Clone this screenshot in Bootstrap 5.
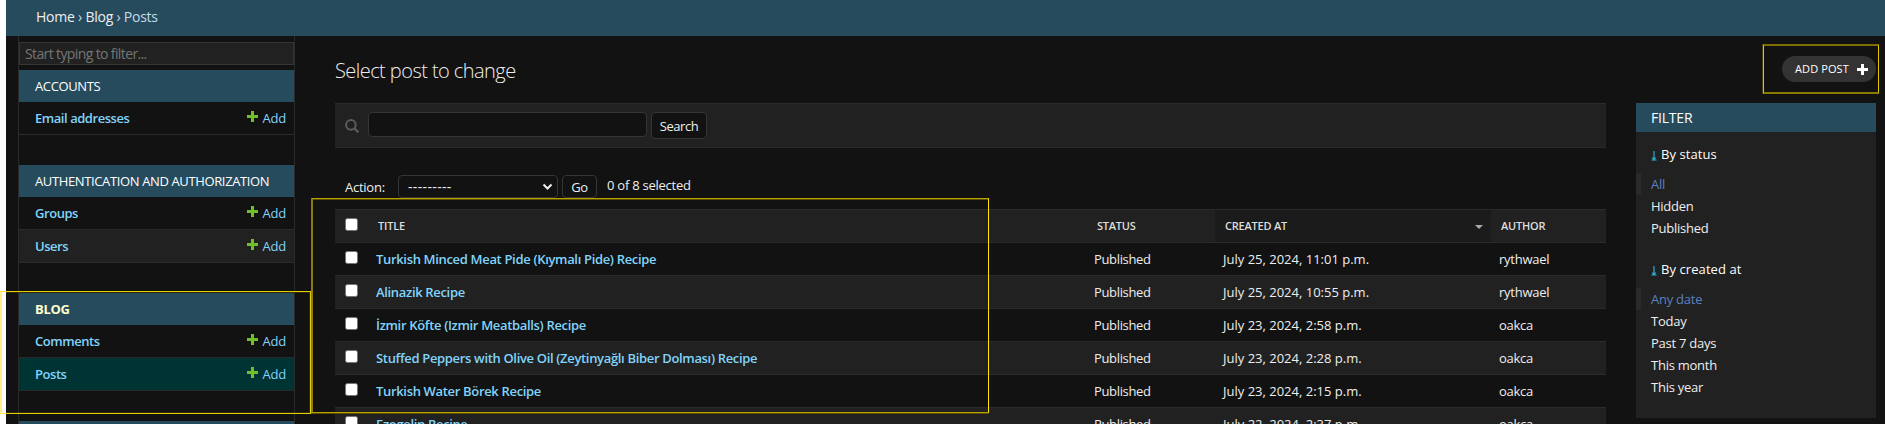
<!DOCTYPE html>
<html lang="en" data-bs-theme="dark">
<head>
<meta charset="utf-8">
<meta name="viewport" content="width=device-width, initial-scale=1">
<title>Select post to change</title>
<link rel="stylesheet" href="https://cdn.jsdelivr.net/npm/bootstrap@5.3.0/dist/css/bootstrap.min.css">
<style>
html { background: #fff; }
body { margin: 0 0 0 6px; height: 424px; overflow: hidden; background: #121212; color: #eee; font: 13px/20px "Open Sans", "Noto Sans", sans-serif; letter-spacing: -.25px; }
a { text-decoration: none; }
.crumbs { height: 36px; background: #264b5d; padding: 0 30px 2px; font-size: 14px; letter-spacing: -.24px; color: #c4dce8; }
.crumbs a { color: #eee; }
.side { width: 277px; margin-left: 12px; border: solid #2a2a2a; border-width: 0 1px; height: 388px; padding-top: 6px; overflow: hidden; }
.side .form-control { height: 23px; padding: 0 5px; border: 1px solid #353535; border-radius: 0; background: #212121; font-size: 14px; line-height: 21px; letter-spacing: -.62px; margin-bottom: 5px; }
.side .form-control::placeholder { color: #757575; }
.app { margin-bottom: 30px; }
.app-title { height: 32px; background: #264b5d; padding-left: 16px; line-height: 33px; text-transform: uppercase; letter-spacing: -.37px; color: #fff; }
.app-title.current { color: #ffc; font-weight: 700; letter-spacing: -.3px; }
.model { height: 33px; border-bottom: 1px solid #2a2a2a; padding: 0 8px 0 16px; line-height: 32px; }
.model a { color: #81d4fa; }
.model a:first-child { font-weight: 600; letter-spacing: -.45px; }
.model svg { display: block; margin: -3px 5px 0 0; }
.alt { background: #212121; }
.chosen { background: #033; }
.content-col { width: 1271px; margin-left: 40px; }
h1 { font-size: 20px; font-weight: 300; line-height: 26px; margin: 22px 0 19px; letter-spacing: -.56px; color: #eee; }
.toolbar { height: 45px; background: #212121; border: solid #2a2a2a; border-width: 1px 0; padding: 8px 10px; }
.query { width: 279px; height: 25px; background: #121212; border: 1px solid #353535; border-radius: 4px; margin: 0 4px 0 9px; padding: 2px 6px; }
.dj-btn { background: #121212; border: 1px solid #353535; border-radius: 4px; padding: 0; color: #eee; font-size: 13px; letter-spacing: -.3px; }
.btn-search { width: 56px; height: 27px; letter-spacing: -.45px; }
.btn-go { width: 35px; height: 23px; }
.actions { height: 61px; padding: 27px 10px 11px; }
.actions .form-select { width: 160px; height: 23px; padding: 0 9px; font-size: 14px; line-height: 21px; letter-spacing: .9px; background-color: #121212; border: 1px solid #353535; border-radius: 4px; color: #eee; background-size: 11px; background-position: right 4px center; background-image: url("data:image/svg+xml,%3Csvg xmlns='http://www.w3.org/2000/svg' viewBox='0 0 11 11'%3E%3Cpath d='M1.5 3.5 5.5 7.5 9.5 3.5' fill='none' stroke='%23eee' stroke-width='2'/%3E%3C/svg%3E"); }
.actions .form-select { letter-spacing: .35px; }
.results { table-layout: fixed; width: 1271px; border-collapse: separate; border-spacing: 0; margin: 0; }
.results th, .results td { border: 0 solid #2a2a2a; border-bottom-width: 1px; height: 33px; padding: 0 8px; line-height: 20px; vertical-align: middle; text-align: left; }
.results thead th { height: 34px; border-top-width: 1px; font-size: 11px; font-weight: 600; color: #ddd; background: #212121; text-transform: uppercase; padding: 0 10px; letter-spacing: -.22px; }
.results thead th.sorted { background: #1b1b1b; }
.results tbody tr:nth-child(even) { background: #212121; }
.results tbody th { font-weight: 600; letter-spacing: -.33px; }
.results tbody th a { color: #81d4fa; }
.results tbody td:nth-child(3) { padding-left: 7px; letter-spacing: -.35px; }
.results tbody td:nth-child(4) { letter-spacing: 0; }
.results .pick { padding: 0 10px; }
.results .form-check-input { display: block; width: 13px; height: 13px; margin: -4px 0 0; background: #fff; border: 1px solid #767676; border-radius: 2.5px; }
.right-col { width: 240px; margin-left: 30px; }
.add-pill { width: 94px; height: 26px; margin: 20px 0 21px; background: #333; color: #fff; border-radius: 13px; font-size: 11px; padding: 0 8px 0 13px; letter-spacing: .1px; }
.filter-box { height: 315px; background: #212121; }
.filter-box h2 { height: 29px; background: #264b5d; color: #fff; font-size: 14px; font-weight: 400; line-height: 30px; padding-left: 15px; margin: 0 0 12px; letter-spacing: -.2px; }
.filter-box h3 { font-size: 13px; line-height: 20px; font-weight: 500; margin: 0 0 9px; padding-left: 15px; color: #fff; letter-spacing: .08px; }
.filter-box h3 svg { margin: -1px 4px 0 0; }
.filter-box li { height: 22px; line-height: 22px; padding-left: 15px; }
.filter-box ul { margin-bottom: 20px; }
.filter-box li.selected { border-left: 5px solid #2a2a2a; padding-left: 10px; color: #5b80c2; }
.mark-box { position: absolute; border: 2px solid #8b7a0c; pointer-events: none; }
.mark-blog { left: 0; top: 291px; width: 311px; height: 123px; border: 1px solid #e6cf00; border-left: 2px solid #fff08a; box-shadow: inset 0 0 0 1px rgba(110, 90, 0, .35); }
.mark-list { left: 311px; top: 198px; width: 678px; height: 215px; border: 1px solid #b8a200; border-left: 2px solid #8b7a0c; border-right-color: #ffe600; box-shadow: inset 0 1px 0 #5c5000, 0 1px 0 #5c5000; }
.mark-add { left: 1763px; top: 44px; width: 116px; height: 50px; border: 1px solid #e0ca00; border-top: 2px solid #7d6d00; border-bottom: 2px solid #8b7a00; box-shadow: -1px 0 0 #453c08; }
.edge-white { position: absolute; left: 0; top: 291px; width: 6px; height: 123px; border: solid #ffe84a; border-width: 1px 0; background: linear-gradient(90deg, #fff08a 2px, #fff 2px); }
</style>
</head>
<body>
<svg class="d-none"><symbol id="plus" viewBox="0 0 11 11"><path d="M4 0h3v4h4v3H7v4H4V7H0V4h4z"/></symbol>
<symbol id="down" viewBox="0 0 6 11"><path d="M3 1v8.500M1.200 7.700 3 9.300 4.800 7.700M.5 10h5" fill="none" stroke="#2fb5e0" stroke-width="1.100"/></symbol></svg>
<nav class="crumbs d-flex align-items-center"><div><a href="#">Home</a> › <a href="#">Blog</a> › Posts</div></nav>
<div class="d-flex align-items-start">
  <aside class="side flex-shrink-0">
    <input class="form-control" placeholder="Start typing to filter...">
    <section class="app"><div class="app-title">Accounts</div>
      <div class="model d-flex justify-content-between"><a href="#">Email addresses</a><a href="#" class="d-flex align-items-center"><svg width="11" height="11" fill="#70bf2b"><use href="#plus"/></svg>Add</a></div>
    </section>
    <section class="app"><div class="app-title">Authentication and Authorization</div>
      <div class="model d-flex justify-content-between"><a href="#">Groups</a><a href="#" class="d-flex align-items-center"><svg width="11" height="11" fill="#70bf2b"><use href="#plus"/></svg>Add</a></div>
      <div class="model alt d-flex justify-content-between"><a href="#">Users</a><a href="#" class="d-flex align-items-center"><svg width="11" height="11" fill="#70bf2b"><use href="#plus"/></svg>Add</a></div>
    </section>
    <section class="app"><div class="app-title current">Blog</div>
      <div class="model d-flex justify-content-between"><a href="#">Comments</a><a href="#" class="d-flex align-items-center"><svg width="11" height="11" fill="#70bf2b"><use href="#plus"/></svg>Add</a></div>
      <div class="model chosen d-flex justify-content-between"><a href="#">Posts</a><a href="#" class="d-flex align-items-center"><svg width="11" height="11" fill="#70bf2b"><use href="#plus"/></svg>Add</a></div>
    </section>
    <section class="app"><div class="app-title"></div></section>
  </aside>
  <main class="content-col flex-shrink-0">
    <h1>Select post to change</h1>
    <div class="toolbar d-flex align-items-start">
      <svg style="margin-top:7px" width="14" height="14" viewBox="0 0 14 14" fill="none" stroke="#5c5c5c" stroke-width="2"><circle cx="5.900" cy="5.900" r="4.800"/><path d="m9.300 9.300 4 4" stroke-width="2.300"/></svg>
      <input class="form-control query"><button class="dj-btn btn-search">Search</button>
    </div>
    <div class="actions d-flex align-items-start">
      <label style="width:53px;padding-top:2px">Action:</label>
      <select class="form-select"><option>---------</option></select>
      <button class="dj-btn btn-go ms-1">Go</button>
      <span style="margin-left:10px">0 of 8 selected</span>
    </div>
    <table class="results">
      <colgroup><col style="width:33px"><col style="width:719px"><col style="width:128px"><col style="width:276px"><col style="width:115px"></colgroup>
      <thead><tr><th><input type="checkbox" class="form-check-input"></th><th>Title</th><th>Status</th><th class="sorted"><span class="d-flex justify-content-between align-items-center">Created at<svg width="8" height="4" style="margin:2px -2px 0 0"><path d="M0 0h8L4 4z" fill="#aaa"/></svg></span></th><th>Author</th></tr></thead>
      <tbody>
      <tr><td class="pick"><input type="checkbox" class="form-check-input"></td><th><a href="#">Turkish Minced Meat Pide (Kıymalı Pide) Recipe</a></th><td>Published</td><td>July 25, 2024, 11:01 p.m.</td><td>rythwael</td></tr>
      <tr><td class="pick"><input type="checkbox" class="form-check-input"></td><th><a href="#">Alinazik Recipe</a></th><td>Published</td><td>July 25, 2024, 10:55 p.m.</td><td>rythwael</td></tr>
      <tr><td class="pick"><input type="checkbox" class="form-check-input"></td><th><a href="#">İzmir Köfte (Izmir Meatballs) Recipe</a></th><td>Published</td><td>July 23, 2024, 2:58 p.m.</td><td>oakca</td></tr>
      <tr><td class="pick"><input type="checkbox" class="form-check-input"></td><th><a href="#">Stuffed Peppers with Olive Oil (Zeytinyağlı Biber Dolması) Recipe</a></th><td>Published</td><td>July 23, 2024, 2:28 p.m.</td><td>oakca</td></tr>
      <tr><td class="pick"><input type="checkbox" class="form-check-input"></td><th><a href="#">Turkish Water Börek Recipe</a></th><td>Published</td><td>July 23, 2024, 2:15 p.m.</td><td>oakca</td></tr>
      <tr><td class="pick"><input type="checkbox" class="form-check-input"></td><th><a href="#">Ezogelin Recipe</a></th><td>Published</td><td>July 22, 2024, 2:37 p.m.</td><td>oakca</td></tr>
      </tbody>
    </table>
  </main>
  <aside class="right-col flex-shrink-0">
    <a href="#" class="add-pill d-flex align-items-center justify-content-between ms-auto">ADD POST<svg width="11" height="11" fill="#fff"><use href="#plus"/></svg></a>
    <div class="filter-box">
      <h2>FILTER</h2>
      <h3><svg width="6" height="11"><use href="#down"/></svg>By status</h3>
      <ul class="list-unstyled"><li class="selected">All</li><li>Hidden</li><li>Published</li></ul>
      <h3><svg width="6" height="11"><use href="#down"/></svg>By created at</h3>
      <ul class="list-unstyled"><li class="selected">Any date</li><li>Today</li><li>Past 7 days</li><li>This month</li><li>This year</li></ul>
    </div>
  </aside>
</div>
<div class="mark-box mark-blog"></div>
<div class="edge-white"></div>
<div class="mark-box mark-list"></div>
<div class="mark-box mark-add"></div>
<script src="https://cdn.jsdelivr.net/npm/bootstrap@5.3.0/dist/js/bootstrap.bundle.min.js"></script>
</body>
</html>
